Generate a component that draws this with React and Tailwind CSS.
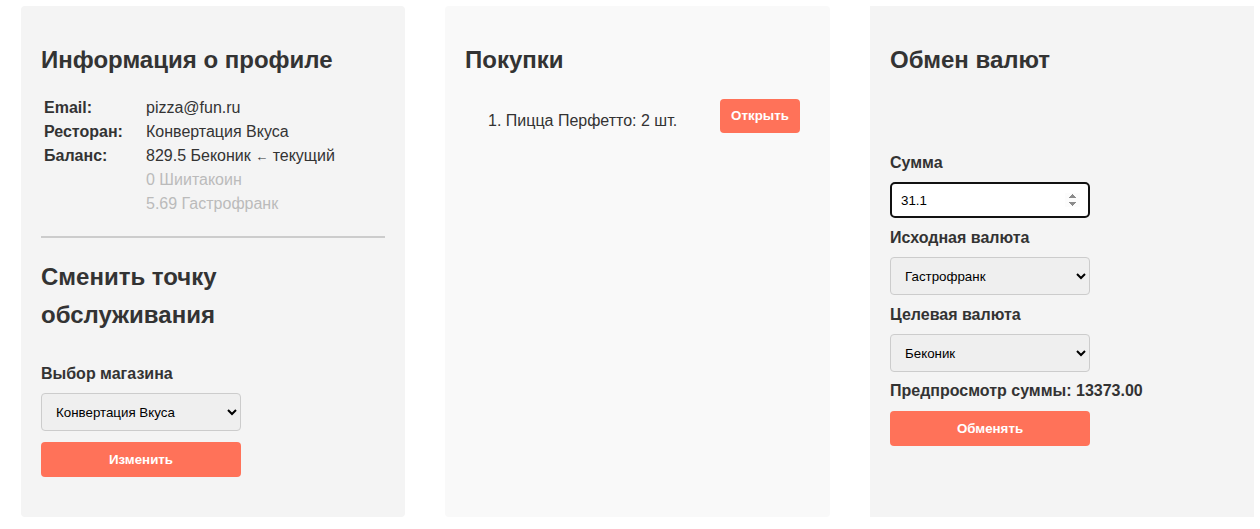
import { useState } from "react";

const balances = [
  { text: "829.5 Беконик", current: true },
  { text: "0 Шиитакоин" },
  { text: "5.69 Гастрофранк" },
];

function Label({ children, className = "" }) {
  return (
    <label className={`block text-[16px] leading-[24px] font-bold text-[#333] ${className}`}>
      {children}
    </label>
  );
}

function Select({ value, onChange, options, className = "" }) {
  return (
    <select
      value={value}
      onChange={(e) => onChange(e.target.value)}
      className={`block w-[200px] h-[38px] px-[10px] border border-[#ccc] rounded-[4px] bg-[#efefef] text-[13.33px] text-black ${className}`}
    >
      {options.map((o) => (
        <option key={o}>{o}</option>
      ))}
    </select>
  );
}

function ActionButton({ children, className = "" }) {
  return (
    <button className={`block w-[200px] h-[35px] rounded-[4px] bg-[#ff7259] text-white text-[13.33px] font-bold ${className}`}>
      {children}
    </button>
  );
}

export default function App() {
  const [shop, setShop] = useState("Конвертация Вкуса");
  const [amount, setAmount] = useState("31.1");
  const [from, setFrom] = useState("Гастрофранк");
  const [to, setTo] = useState("Беконик");
  const currencies = ["Беконик", "Шиитакоин", "Гастрофранк"];

  return (
    <div className="font-['Liberation_Sans',Arial,sans-serif] bg-white min-h-[529px] flex gap-10 pl-[21px] pt-[6px] text-[#333]">
      {/* Profile */}
      <div className="w-[384px] h-[511px] shrink-0 bg-[#f4f4f4] rounded-[4px] px-5">
        <h2 className="mt-[40px] text-[24px] leading-[28px] font-bold">Информация о профиле</h2>
        <div className="mt-[22px] pl-[3px] text-[16px] leading-[24px]">
          <div className="flex h-[24px]">
            <span className="w-[102px] font-bold">Email:</span>
            <span>pizza@fun.ru</span>
          </div>
          <div className="flex h-[24px]">
            <span className="w-[102px] font-bold">Ресторан:</span>
            <span>Конвертация Вкуса</span>
          </div>
          {balances.map((b, i) => (
            <div className="flex h-[24px]" key={b.text}>
              <span className="w-[102px] font-bold">{i === 0 ? "Баланс:" : ""}</span>
              <span className={b.current ? "" : "text-[#bbb]"}>
                {b.text}
                {b.current && (
                  <span>
                    {" "}
                    <span className="text-[13px] leading-none">←</span> текущий
                  </span>
                )}
              </span>
            </div>
          ))}
        </div>
        <hr className="mt-[20px] border-0 h-[2px] bg-[#ccc]" />
        <h2 className="mt-[20px] text-[24px] leading-[38px] font-bold">Сменить точку обслуживания</h2>
        <Label className="mt-[28px]">Выбор магазина</Label>
        <Select value={shop} onChange={setShop} options={["Конвертация Вкуса", "Другой ресторан"]} className="mt-[7px]" />
        <ActionButton className="mt-[11px]">Изменить</ActionButton>
      </div>

      {/* Purchases */}
      <div className="w-[385px] h-[511px] shrink-0 bg-[#f9f9f9] rounded-[4px] px-5">
        <h2 className="mt-[40px] text-[24px] leading-[28px] font-bold">Покупки</h2>
        <ol className="mt-[25px]">
          <li className="flex items-start justify-between pl-[23px] pr-[10px]">
            <span className="mt-[10px] text-[16px] leading-[24px]">1. Пицца Перфетто: 2 шт.</span>
            <button className="w-[80px] h-[34px] rounded-[4px] bg-[#ff7259] text-white text-[13.33px] font-bold">
              Открыть
            </button>
          </li>
        </ol>
      </div>

      {/* Exchange */}
      <div className="w-[384px] h-[511px] shrink-0 bg-[#f4f4f4] px-5">
        <h2 className="mt-[40px] text-[24px] leading-[28px] font-bold">Обмен валют</h2>
        <Label className="mt-[77px]">Сумма</Label>
        <input
          type="number"
          step="0.1"
          autoFocus
          value={amount}
          onChange={(e) => setAmount(e.target.value)}
          className="block mt-[7px] w-[200px] h-[36px] pl-[9px] pr-[8px] border-2 border-[#111] rounded-[5px] bg-white text-[13.33px] text-black outline-none"
        />
        <Label className="mt-[8px]">Исходная валюта</Label>
        <Select value={from} onChange={setFrom} options={currencies} className="mt-[7px]" />
        <Label className="mt-[8px]">Целевая валюта</Label>
        <Select value={to} onChange={setTo} options={currencies} className="mt-[7px]" />
        <div className="mt-[7px] text-[16px] leading-[24px] font-bold">Предпросмотр суммы: 13373.00</div>
        <ActionButton className="mt-[8px]">Обменять</ActionButton>
      </div>
    </div>
  );
}
